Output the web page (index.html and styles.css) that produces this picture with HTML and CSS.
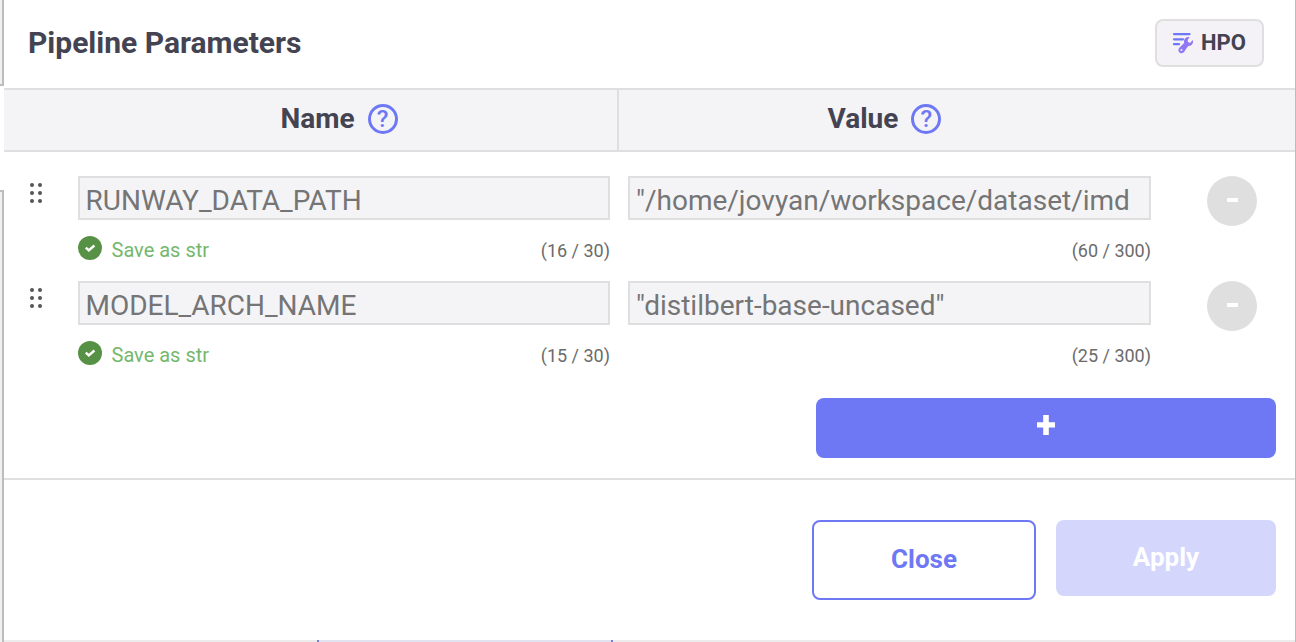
FILE: index.html
```html
<!DOCTYPE html>
<html lang="en">
<head>
<meta charset="utf-8">
<title>Pipeline Parameters</title>
<link rel="stylesheet" href="styles.css">
</head>
<body>
<div class="screen">
  <div class="rail"><div class="rail-top"></div><div class="rail-gap"></div><div class="rail-bottom"></div></div>
  <main class="dialog">
    <header class="title-bar">
      <h1 class="title">Pipeline Parameters</h1>
      <button class="hpo">
        <svg class="hpo-icon" viewBox="0 0 22 22" width="22" height="22">
          <path d="M3 2.1h15.6M3 7.3h9M3 12.2h5" fill="none" stroke="#6e78f4" stroke-width="2.2" stroke-linecap="round"/>
          <path fill="#9078f5" fill-rule="evenodd" d="M18.6 5.1c-2.9-.5-5.3 1.2-5.6 3.7-.1.9 0 1.5.2 2.2l-4.6 4.6c-1.4 1.1-1.6 3-.6 4.3 1.2 1.6 3.9 1.7 5.1.1.5-.5.7-1.1.9-1.6l3.2-4.4c2.8.3 5-2 4.9-5l-.3-.9-2.8 2.8-2-.8-.3-2.2zM10.4 17a1 1 0 1 1 0 2 1 1 0 0 1 0-2z"/>
        </svg>
        <span class="hpo-label">HPO</span>
      </button>
    </header>
    <div class="columns">
      <div class="column column-name"><span>Name</span><span class="help">?</span></div>
      <div class="column column-value"><span>Value</span><span class="help">?</span></div>
    </div>
    <section class="parameters">
      <div class="row">
        <svg class="grip" viewBox="0 0 12 20" width="12" height="20"><g fill="#555"><circle cx="2" cy="2" r="2"/><circle cx="10" cy="2" r="2"/><circle cx="2" cy="10" r="2"/><circle cx="10" cy="10" r="2"/><circle cx="2" cy="18" r="2"/><circle cx="10" cy="18" r="2"/></g></svg>
        <div class="cell name-cell">
          <div class="field">RUNWAY_DATA_PATH</div>
          <div class="hint"><svg class="check" viewBox="0 0 24 24" width="24" height="24"><circle cx="12" cy="12" r="12" fill="#569146"/><path d="M7.8 11.7l3 2.7 5.6-4.9" fill="none" stroke="#fff" stroke-width="2.4"/></svg><span class="saved">Save as str</span><span class="count">(16 / 30)</span></div>
        </div>
        <div class="cell value-cell">
          <div class="field">"/home/jovyan/workspace/dataset/imd</div>
          <div class="hint"><span class="count">(60 / 300)</span></div>
        </div>
        <button class="remove" aria-label="Remove"><span class="minus"></span></button>
      </div>
      <div class="row">
        <svg class="grip" viewBox="0 0 12 20" width="12" height="20"><g fill="#555"><circle cx="2" cy="2" r="2"/><circle cx="10" cy="2" r="2"/><circle cx="2" cy="10" r="2"/><circle cx="10" cy="10" r="2"/><circle cx="2" cy="18" r="2"/><circle cx="10" cy="18" r="2"/></g></svg>
        <div class="cell name-cell">
          <div class="field">MODEL_ARCH_NAME</div>
          <div class="hint"><svg class="check" viewBox="0 0 24 24" width="24" height="24"><circle cx="12" cy="12" r="12" fill="#569146"/><path d="M7.8 11.7l3 2.7 5.6-4.9" fill="none" stroke="#fff" stroke-width="2.4"/></svg><span class="saved">Save as str</span><span class="count">(15 / 30)</span></div>
        </div>
        <div class="cell value-cell">
          <div class="field">"distilbert-base-uncased"</div>
          <div class="hint"><span class="count">(25 / 300)</span></div>
        </div>
        <button class="remove" aria-label="Remove"><span class="minus"></span></button>
      </div>
      <button class="add" aria-label="Add"><svg viewBox="0 0 18 20" width="18" height="20"><path d="M6.2 0h5.6v7.2H18v5.4h-6.2V20H6.2v-7.4H0V7.2h6.2z" fill="#fff"/></svg></button>
    </section>
    <footer class="actions">
      <button class="close">Close</button>
      <button class="apply">Apply</button>
    </footer>
    <div class="canvas-edge"><div class="node-edge"></div></div>
  </main>
</div>
</body>
</html>
```
FILE: styles.css
```css
* { box-sizing: border-box; }
body { margin: 0; background: #fff; font-family: Roboto, "Liberation Sans", sans-serif; color: #444352; }
button { font: inherit; color: inherit; margin: 0; padding: 0; border: 0; }
.screen { display: flex; width: 1296px; height: 642px; overflow: hidden; }
.rail { width: 4px; display: flex; flex-direction: column; }
.rail-top { height: 86px; background: #f0f0f0; border: solid #bdbdbd; border-width: 0 2px 2px 0; }
.rail-gap { height: 104px; }
.rail-bottom { flex: 1; background: #f0f0f0; border: solid #bdbdbd; border-width: 2px 2px 0 0; }
.dialog { width: 1292px; border-right: 1px solid #bcbcbc; display: flex; flex-direction: column; }
.title-bar { height: 88px; padding: 19px 31px 0 24px; display: flex; justify-content: space-between; align-items: flex-start; }
.title { margin: 0; padding-top: 6px; font-size: 30px; line-height: 36px; font-weight: 700; letter-spacing: 0; }
.hpo { width: 109px; height: 48px; border: 2px solid #dfdfdf; border-radius: 8px; background: #f4f2f6; display: flex; align-items: center; padding-left: 14px; gap: 8px; font-size: 22px; font-weight: 700; }
.hpo-icon { flex: none; }
.hpo-label { padding-bottom: 2px; }
.columns { height: 64px; display: flex; border: solid #dfdfdf; border-width: 2px 0; background: #f4f4f7; font-size: 28px; font-weight: 700; line-height: 57px; }
.column { display: flex; justify-content: center; gap: 13px; }
.column-name { width: 615px; border-right: 2px solid #dfdfdf; padding-left: 57px; }
.column-value { width: 531px; }
.help { width: 30px; height: 30px; margin-top: 14px; border: 3px solid #6e78f4; border-radius: 50%; color: #6e78f4; font-size: 24px; font-weight: 500; line-height: 25px; text-align: center; }
.parameters { height: 326px; padding: 24px 19px 0 26px; display: flex; flex-direction: column; }
.row { height: 105px; display: flex; }
.grip { margin: 7px 42px 0 0; width: 12px; flex: none; }
.cell { flex: none; }
.name-cell { width: 532px; margin-left: -6px; margin-right: 18px; }
.value-cell { width: 523px; margin-right: 56px; }
.field { height: 44px; border: 2px solid #dfdfdf; background: #f4f4f7; padding-left: 6px; font-size: 28px; line-height: 46px; color: #757575; white-space: nowrap; overflow: hidden; }
.name-cell .field { padding-left: 5.5px; }
.hint { display: flex; height: 50px; padding-top: 16px; }
.saved { margin-left: 9.5px; font-size: 20px; line-height: 28px; color: #75b76c; }
.count { margin-left: auto; font-size: 18px; line-height: 30px; color: #6b6b6b; }
.remove { width: 50px; height: 50px; border-radius: 50%; background: #dfdfdf; display: flex; justify-content: center; padding-top: 22px; }
.minus { width: 11px; height: 4px; background: #fff; }
.add { align-self: flex-end; margin-top: 12px; width: 460px; height: 60px; border-radius: 8px; background: #6e78f4; display: flex; justify-content: center; padding-top: 17px; }
.actions { height: 162px; border-top: 2px solid #dfdfdf; padding: 40px 19px 0 0; display: flex; justify-content: flex-end; gap: 20px; font-size: 26px; font-weight: 700; }
.close { width: 224px; height: 80px; padding-bottom: 2px; border: 2px solid #6e78f4; border-radius: 8px; background: #fff; color: #6e78f4; }
.apply { width: 220px; height: 76px; padding-bottom: 2px; border-radius: 8px; background: #d4d6fc; color: #fff; }
.canvas-edge { height: 2px; background: #ececec; padding-left: 313px; }
.node-edge { width: 296px; height: 2px; background: #e2e3f0; border: solid #7a7fd5; border-width: 0 2px; }
```
